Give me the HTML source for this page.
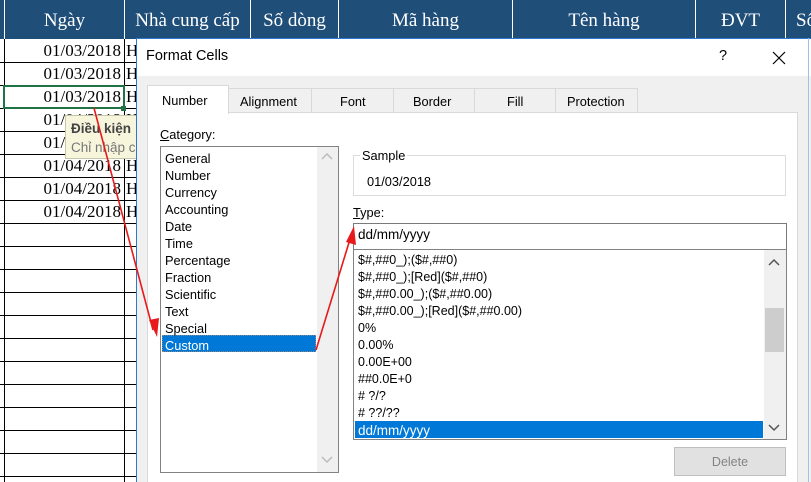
<!DOCTYPE html>
<html><head><meta charset="utf-8"><style>
*{margin:0;padding:0;box-sizing:border-box}
body{width:811px;height:482px;overflow:hidden;background:#fff;position:relative;font-family:"Segoe UI","Liberation Sans","DejaVu Sans",sans-serif;font-size:12.5px;color:#000}
.a{position:absolute}
.hd{background:#1f4e79;top:0;left:0;width:811px;height:39px}
.hc{position:absolute;top:0;height:39px;line-height:41px;color:#fff;font-family:"Liberation Serif",serif;font-size:19px;text-align:center;border-left:1px solid #fff}
.cell{position:absolute;left:4px;width:120px;height:23px;font-family:"Liberation Serif",serif;font-size:17px;text-align:right;padding-right:3px;line-height:23px}
.hl{position:absolute;left:0;width:136px;height:1px;background:#000}
.t{position:absolute;font-size:12.8px}
</style></head><body>
<div class="a hd"></div>
<div class="hc" style="left:4px;width:120px">Ngày</div>
<div class="hc" style="left:124px;width:126px">Nhà cung cấp</div>
<div class="hc" style="left:250px;width:88px">Số dòng</div>
<div class="hc" style="left:338px;width:174px">Mã hàng</div>
<div class="hc" style="left:512px;width:183px">Tên hàng</div>
<div class="hc" style="left:695px;width:90px">ĐVT</div>
<div class="hc" style="left:785px;width:40px;text-align:left;padding-left:10px">Số</div>
<div class="a" style="left:4px;top:39px;width:1px;height:443px;background:#000"></div>
<div class="a" style="left:124px;top:39px;width:1px;height:443px;background:#000"></div>
<div class="hl" style="top:62px"></div><div class="hl" style="top:85px"></div><div class="hl" style="top:108px"></div><div class="hl" style="top:131px"></div><div class="hl" style="top:154px"></div><div class="hl" style="top:177px"></div><div class="hl" style="top:200px"></div><div class="hl" style="top:223px"></div><div class="hl" style="top:246px"></div><div class="hl" style="top:269px"></div><div class="hl" style="top:292px"></div><div class="hl" style="top:315px"></div><div class="hl" style="top:338px"></div><div class="hl" style="top:361px"></div><div class="hl" style="top:384px"></div><div class="hl" style="top:407px"></div><div class="hl" style="top:430px"></div><div class="hl" style="top:453px"></div><div class="hl" style="top:476px"></div>
<div class="cell" style="top:39px">01/03/2018</div>
<div class="cell" style="top:62px">01/03/2018</div>
<div class="cell" style="top:85px">01/03/2018</div>
<div class="cell" style="top:108px">01/04/2018</div>
<div class="cell" style="top:131px">01/04/2018</div>
<div class="cell" style="top:154px">01/04/2018</div>
<div class="cell" style="top:177px">01/04/2018</div>
<div class="cell" style="top:200px">01/04/2018</div>
<div class="a" style="left:126px;top:39px;font-family:'Liberation Serif',serif;font-size:17px;line-height:23px">H<br>H<br>H<br>H<br>H<br>H<br>H<br>H</div>
<div class="a" style="left:3px;top:85px;width:122px;height:24px;border:2px solid #217346"></div>
<div class="a" style="left:121px;top:106px;width:5px;height:5px;background:#217346"></div>
<div class="a" style="left:65px;top:115px;width:75px;height:44px;background:#f7f5dc;border:1px solid #c8c6a8;padding:3px 5px;font-size:13.5px;line-height:19px;white-space:nowrap;overflow:hidden"><b style="color:#444">Điều kiện</b><br><span style="color:#777">Chỉ nhập c</span></div>
<div class="a" style="left:136px;top:38px;width:675px;height:444px;background:#f0f0f0;border-left:1px solid #2b7ad0;border-top:1px solid #2b7ad0"></div>
<div class="a" style="left:137px;top:39px;width:674px;height:37px;background:#fff"></div>
<div class="t" style="left:146px;top:48px;font-size:14.5px">Format Cells</div>
<div class="t" style="left:719px;top:48px;font-size:14.5px">?</div>
<svg class="a" style="left:772px;top:51px" width="14" height="14"><path d="M1 1L13 13M13 1L1 13" stroke="#000" stroke-width="1.2"/></svg>
<div class="a" style="left:808px;top:38px;width:1px;height:444px;background:#9cc2ea"></div>
<div class="a" style="left:228px;top:88px;width:410px;height:25px;background:#f0f0f0;border:1px solid #d9d9d9"></div>
<div class="a" style="left:311px;top:88px;width:1px;height:24px;background:#d9d9d9"></div>
<div class="a" style="left:393px;top:88px;width:1px;height:24px;background:#d9d9d9"></div>
<div class="a" style="left:474px;top:88px;width:1px;height:24px;background:#d9d9d9"></div>
<div class="a" style="left:555px;top:88px;width:1px;height:24px;background:#d9d9d9"></div>
<div class="a" style="left:147px;top:112px;width:651px;height:370px;background:#fff;border:1px solid #d9d9d9;border-bottom:none"></div>
<div class="a" style="left:147px;top:85px;width:82px;height:29px;background:#fff;border:1px solid #d9d9d9;border-bottom:none"></div>
<div class="t" style="left:162px;top:93px">Number</div>
<div class="t" style="left:240px;top:94px">Alignment</div>
<div class="t" style="left:340px;top:94px">Font</div>
<div class="t" style="left:413px;top:94px">Border</div>
<div class="t" style="left:507px;top:94px">Fill</div>
<div class="t" style="left:567px;top:94px">Protection</div>
<div class="t" style="left:160px;top:127px"><u>C</u>ategory:</div>
<div class="a" style="left:160px;top:146px;width:179px;height:327px;border:1px solid #828282;background:#fff"></div>
<div class="a" style="left:317px;top:147px;width:21px;height:325px;background:#f0f0f0"></div>
<svg class="a" style="left:321px;top:152px" width="12" height="8"><path d="M1 7L6 2L11 7" stroke="#bbb" fill="none" stroke-width="1.5"/></svg>
<svg class="a" style="left:321px;top:456px" width="12" height="8"><path d="M1 1L6 6L11 1" stroke="#bbb" fill="none" stroke-width="1.5"/></svg>
<div class="a" style="left:162px;top:335px;width:154px;height:17px;background:#0078d7;border:1px dotted #888"></div>
<div class="t" style="left:165px;top:150px;line-height:17px">General<br>Number<br>Currency<br>Accounting<br>Date<br>Time<br>Percentage<br>Fraction<br>Scientific<br>Text<br>Special<br><span style="color:#fff">Custom</span></div>
<div class="a" style="left:353px;top:155px;width:433px;height:41px;border:1px solid #dcdcdc"></div>
<div class="t" style="left:360px;top:148px;background:#fff;padding:0 2px">Sample</div>
<div class="t" style="left:367px;top:174px">01/03/2018</div>
<div class="t" style="left:353px;top:205px"><u>T</u>ype:</div>
<div class="a" style="left:353px;top:223px;width:434px;height:27px;border:1px solid #7a7a7a;background:#fff"></div>
<div class="t" style="left:358px;top:227px;font-size:13.5px">dd/mm/yyyy</div>
<div class="a" style="left:353px;top:249px;width:434px;height:191px;border:1px solid #828282;background:#fff"></div>
<div class="a" style="left:764px;top:250px;width:22px;height:189px;background:#f0f0f0"></div>
<div class="a" style="left:765px;top:308px;width:19px;height:44px;background:#cdcdcd"></div>
<svg class="a" style="left:768px;top:258px" width="12" height="8"><path d="M1 7L6 2L11 7" stroke="#555" fill="none" stroke-width="1.5"/></svg>
<svg class="a" style="left:768px;top:424px" width="12" height="8"><path d="M1 1L6 6L11 1" stroke="#555" fill="none" stroke-width="1.5"/></svg>
<div class="a" style="left:355px;top:421px;width:408px;height:17px;background:#0078d7"></div>
<div class="t" style="left:358px;top:252px;line-height:17px;font-size:12.5px">$#,##0_);($#,##0)<br>$#,##0_);[Red]($#,##0)<br>$#,##0.00_);($#,##0.00)<br>$#,##0.00_);[Red]($#,##0.00)<br>0%<br>0.00%<br>0.00E+00<br>##0.0E+0<br># ?/?<br># ??/??<br><span style="color:#fff;font-size:13.5px">dd/mm/yyyy</span></div>
<div class="a" style="left:674px;top:447px;width:112px;height:29px;background:#e1e1e1;border:1px solid #bfbfbf;color:#838383;text-align:center;line-height:29px">Delete</div>
<svg class="a" style="left:0;top:0" width="811" height="482">
<path d="M94 108L153 330" stroke="#e8191b" stroke-width="1.6" fill="none"/>
<path d="M149 320L157 337L159 318Z" fill="#e8191b"/>
<path d="M316 350L351 236" stroke="#e8191b" stroke-width="1.6" fill="none"/>
<path d="M346 242L354 226L356 245Z" fill="#e8191b"/>
</svg>
</body></html>
